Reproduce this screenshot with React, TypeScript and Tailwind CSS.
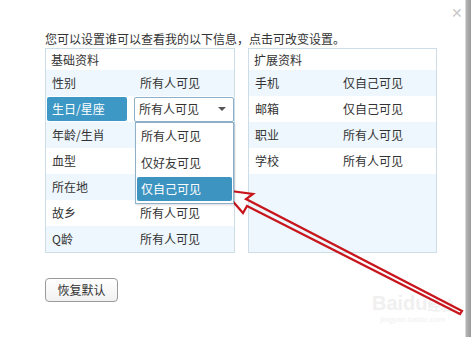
import React from "react";

const font = { fontFamily: '"Noto Sans CJK SC", "Noto Sans", sans-serif' };

function Row({ label, value, shade }: { label: string; value: string; shade: boolean }) {
  return (
    <div className={`flex h-[26px] items-center ${shade ? "bg-[#eef7fd]" : "bg-white"}`}>
      <div className="w-[94px] pl-[6px]">{label}</div>
      <div>{value}</div>
    </div>
  );
}

export default function App() {
  return (
    <div className="flex h-[337px] w-[471px] overflow-hidden bg-white text-[12px] text-[#333]" style={font}>
      <div className="relative flex-1 pl-[45px] pt-[30px]">
        <div className="h-[18px] leading-[18px]">您可以设置谁可以查看我的以下信息，点击可改变设置。</div>
        <div className="flex gap-[13px]">
          {/* left panel */}
          <div className="w-[190px] border border-[#cddde8]">
            <div className="flex h-[21px] items-center pl-[5px]">基础资料</div>
            <Row label="性别" value="所有人可见" shade />
            <div className="flex h-[26px] items-center bg-white">
              <div className="ml-[1px] flex h-[24px] w-[82px] items-center rounded-[2px] bg-[#3d98c5] pl-[5px] text-white">生日/星座</div>
              <div className="relative ml-[7px]">
                <div className="flex h-[25px] w-[100px] items-center justify-between rounded-[2px] border border-[#8eb1c9] bg-white pl-[4px] pr-[7px]">
                  <span>所有人可见</span>
                  <svg width="8" height="4" viewBox="0 0 8 4"><path d="M0 0H8L4 4Z" fill="#555" /></svg>
                </div>
                <div className="absolute left-[1px] top-[25px] z-10 flex h-[82px] w-[99px] flex-col border border-[#8eb1c9] bg-white shadow-[1px_1px_2px_rgba(0,0,0,0.15)]">
                  <div className="flex h-[27px] items-center pl-[5px]">所有人可见</div>
                  <div className="flex h-[27px] items-center pl-[5px]">仅好友可见</div>
                  <div className="mx-[1px] flex h-[24px] items-center rounded-[2px] bg-[#3d94c1] pl-[4px] text-white">仅自己可见</div>
                </div>
              </div>
            </div>
            <Row label="年龄/生肖" value="" shade />
            <Row label="血型" value="" shade={false} />
            <Row label="所在地" value="" shade />
            <Row label="故乡" value="所有人可见" shade={false} />
            <Row label="Q龄" value="所有人可见" shade />
          </div>
          {/* right panel */}
          <div className="flex w-[189px] flex-col border border-[#cddde8]">
            <div className="flex h-[21px] items-center pl-[5px]">扩展资料</div>
            <Row label="手机" value="仅自己可见" shade />
            <Row label="邮箱" value="仅自己可见" shade={false} />
            <Row label="职业" value="所有人可见" shade />
            <Row label="学校" value="所有人可见" shade={false} />
            <div className="flex-1 bg-[#eef7fd]" />
          </div>
        </div>
        <button className="mt-[25px] flex h-[24px] w-[73px] items-center justify-center rounded-[4px] border border-[#9a9a9a] bg-gradient-to-b from-white to-[#f1f1f1] text-[12px] text-[#333]">
          恢复默认
        </button>

        {/* close */}
        <div className="absolute left-[451px] top-[5px] text-[14px] leading-[14px] text-[#c8c8c8]">✕</div>

        {/* watermark */}
        <div className="absolute left-[372px] top-[293px] flex flex-col items-center text-[#f0f0f0]">
          <div className="text-[20px] font-bold leading-[20px]" style={{ fontFamily: '"Liberation Sans", sans-serif' }}>
            Baidu<span className="text-[13px]" style={font}>经验</span>
          </div>
          <div className="text-[8px] leading-[10px]" style={{ fontFamily: '"Liberation Sans", sans-serif' }}>jingyan.baidu.com</div>
        </div>

        {/* red arrow */}
        <svg className="pointer-events-none absolute left-0 top-0" width="471" height="337" viewBox="0 0 471 337">
          <path
            d="M223 190 L253 194 L246 199 L462 311 L460 314 L247 206 L243 213 Z"
            fill="none"
            stroke="#c8161d"
            strokeWidth="2.2"
            strokeLinejoin="miter"
          />
        </svg>
      </div>
      <div className="w-[6px] border-l border-[#d8d8d8] bg-gradient-to-r from-[#b5b5b5] to-[#9a9a9a]" />
    </div>
  );
}
